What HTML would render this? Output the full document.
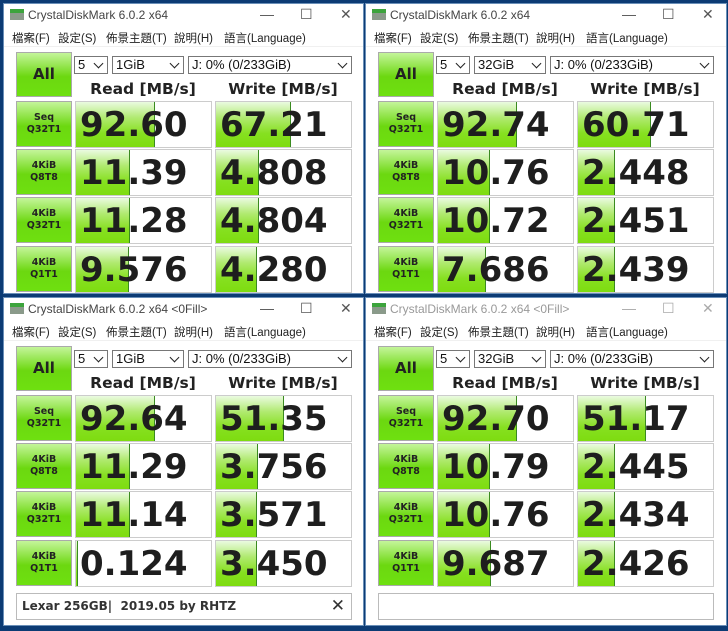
<!DOCTYPE html>
<html><head><meta charset="utf-8"><style>
*{box-sizing:border-box;margin:0;padding:0}
body{width:728px;height:631px;background:#0c3b74;position:relative;overflow:hidden;font-family:"Liberation Sans","Noto Sans CJK TC",sans-serif}
.w{position:absolute;background:#fff;border:1px solid #6a8fb8}
.t{position:absolute;left:0;top:0;right:0;height:22px;background:#fff;font-size:12px;color:#444}
.t .ic{position:absolute;left:6px;top:5px;width:14px;height:11px;background:#8a9a8a;border-top:4px solid #3ca43c}
.t .tx{position:absolute;left:24px;top:4px}
.t .ctl{position:absolute;top:2px;font-size:14px;color:#555}
.m{position:absolute;left:0;top:22px;right:0;height:21px;font-size:11.5px;color:#222;border-bottom:1px solid #f0f0f0}
.m span{position:absolute;top:4px}
.b{position:absolute;border:1px solid #aaa;background:linear-gradient(#c4f59a,#6cd810 55%,#6ee010);font-weight:bold;color:#222;text-align:center;font-family:"DejaVu Sans",sans-serif}
.all{font-size:15px;line-height:43px}
.lb{font-size:9.5px;line-height:12px;padding-top:10px}
.c{position:absolute;border:1px solid #777;height:18px;background:#fff;font-size:13px;padding-left:3px;line-height:16px;color:#111}
.c:after{content:"";position:absolute;right:5px;top:3px;width:6px;height:6px;border-right:1.5px solid #222;border-bottom:1.5px solid #222;transform:rotate(45deg)}
.h{position:absolute;width:136px;text-align:center;font-family:"DejaVu Sans",sans-serif;font-weight:bold;font-size:15.5px;color:#222}
.v{position:absolute;width:137px;height:47px;border:1px solid #ccc;background:#fff;overflow:hidden}
.v i{position:absolute;left:0;top:0;bottom:0;background:linear-gradient(#eafbe0,#b0ea70 35%,#86e020 70%,#7edc10);border-right:1px solid #3a8a20}
.v b{position:absolute;left:4px;top:0;font-family:"DejaVu Sans",sans-serif;font-size:34px;line-height:46px;color:#1e1e1e}
.cm{position:absolute;border:1px solid #bbb;height:27px;background:#fff;font-family:"DejaVu Sans",sans-serif;font-weight:bold;font-size:12px;color:#333;padding:5px 0 0 5px}
</style></head><body>

<!-- TL -->
<div class="w" style="left:3px;top:3px;width:361px;height:291px">
<div class="t"><div class="ic"></div><div class="tx">CrystalDiskMark 6.0.2 x64</div><div class="ctl" style="left:256px">—</div><div class="ctl" style="left:296px">☐</div><div class="ctl" style="left:336px">✕</div></div>
<div class="m"><span style="left:8px">檔案(F)</span><span style="left:54px">設定(S)</span><span style="left:102px">佈景主題(T)</span><span style="left:170px">說明(H)</span><span style="left:220px">語言(Language)</span></div>
<div class="b all" style="left:12px;top:48px;width:56px;height:45px">All</div>
<div class="c" style="left:70px;top:52px;width:34px">5</div><div class="c" style="left:108px;top:52px;width:72px">1GiB</div><div class="c" style="left:184px;top:52px;width:164px">J: 0% (0/233GiB)</div>
<div class="h" style="left:71px;top:76px">Read [MB/s]</div><div class="h" style="left:211px;top:76px">Write [MB/s]</div>
<div class="b lb" style="left:12px;top:97px;width:56px;height:46px">Seq<br>Q32T1</div>
<div class="v" style="left:71px;top:97px"><i style="width:79px"></i><b>92.60</b></div><div class="v" style="left:211px;top:97px"><i style="width:75px"></i><b>67.21</b></div>
<div class="b lb" style="left:12px;top:145px;width:56px;height:46px">4KiB<br>Q8T8</div>
<div class="v" style="left:71px;top:145px"><i style="width:54px"></i><b>11.39</b></div><div class="v" style="left:211px;top:145px"><i style="width:43px"></i><b>4.808</b></div>
<div class="b lb" style="left:12px;top:193px;width:56px;height:46px">4KiB<br>Q32T1</div>
<div class="v" style="left:71px;top:193px"><i style="width:54px"></i><b>11.28</b></div><div class="v" style="left:211px;top:193px"><i style="width:43px"></i><b>4.804</b></div>
<div class="b lb" style="left:12px;top:242px;width:56px;height:46px">4KiB<br>Q1T1</div>
<div class="v" style="left:71px;top:242px"><i style="width:53px"></i><b>9.576</b></div><div class="v" style="left:211px;top:242px"><i style="width:41px"></i><b>4.280</b></div>
</div>

<!-- TR -->
<div class="w" style="left:365px;top:3px;width:362px;height:291px">
<div class="t"><div class="ic"></div><div class="tx">CrystalDiskMark 6.0.2 x64</div><div class="ctl" style="left:256px">—</div><div class="ctl" style="left:296px">☐</div><div class="ctl" style="left:336px">✕</div></div>
<div class="m"><span style="left:8px">檔案(F)</span><span style="left:54px">設定(S)</span><span style="left:102px">佈景主題(T)</span><span style="left:170px">說明(H)</span><span style="left:220px">語言(Language)</span></div>
<div class="b all" style="left:12px;top:48px;width:56px;height:45px">All</div>
<div class="c" style="left:70px;top:52px;width:34px">5</div><div class="c" style="left:108px;top:52px;width:72px">32GiB</div><div class="c" style="left:184px;top:52px;width:164px">J: 0% (0/233GiB)</div>
<div class="h" style="left:71px;top:76px">Read [MB/s]</div><div class="h" style="left:211px;top:76px">Write [MB/s]</div>
<div class="b lb" style="left:12px;top:97px;width:56px;height:46px">Seq<br>Q32T1</div>
<div class="v" style="left:71px;top:97px"><i style="width:79px"></i><b>92.74</b></div><div class="v" style="left:211px;top:97px"><i style="width:73px"></i><b>60.71</b></div>
<div class="b lb" style="left:12px;top:145px;width:56px;height:46px">4KiB<br>Q8T8</div>
<div class="v" style="left:71px;top:145px"><i style="width:52px"></i><b>10.76</b></div><div class="v" style="left:211px;top:145px"><i style="width:37px"></i><b>2.448</b></div>
<div class="b lb" style="left:12px;top:193px;width:56px;height:46px">4KiB<br>Q32T1</div>
<div class="v" style="left:71px;top:193px"><i style="width:52px"></i><b>10.72</b></div><div class="v" style="left:211px;top:193px"><i style="width:37px"></i><b>2.451</b></div>
<div class="b lb" style="left:12px;top:242px;width:56px;height:46px">4KiB<br>Q1T1</div>
<div class="v" style="left:71px;top:242px"><i style="width:48px"></i><b>7.686</b></div><div class="v" style="left:211px;top:242px"><i style="width:37px"></i><b>2.439</b></div>
</div>

<!-- BL -->
<div class="w" style="left:3px;top:297px;width:361px;height:329px">
<div class="t"><div class="ic"></div><div class="tx">CrystalDiskMark 6.0.2 x64 &lt;0Fill&gt;</div><div class="ctl" style="left:256px">—</div><div class="ctl" style="left:296px">☐</div><div class="ctl" style="left:336px">✕</div></div>
<div class="m"><span style="left:8px">檔案(F)</span><span style="left:54px">設定(S)</span><span style="left:102px">佈景主題(T)</span><span style="left:170px">說明(H)</span><span style="left:220px">語言(Language)</span></div>
<div class="b all" style="left:12px;top:48px;width:56px;height:45px">All</div>
<div class="c" style="left:70px;top:52px;width:34px">5</div><div class="c" style="left:108px;top:52px;width:72px">1GiB</div><div class="c" style="left:184px;top:52px;width:164px">J: 0% (0/233GiB)</div>
<div class="h" style="left:71px;top:76px">Read [MB/s]</div><div class="h" style="left:211px;top:76px">Write [MB/s]</div>
<div class="b lb" style="left:12px;top:97px;width:56px;height:46px">Seq<br>Q32T1</div>
<div class="v" style="left:71px;top:97px"><i style="width:79px"></i><b>92.64</b></div><div class="v" style="left:211px;top:97px"><i style="width:68px"></i><b>51.35</b></div>
<div class="b lb" style="left:12px;top:145px;width:56px;height:46px">4KiB<br>Q8T8</div>
<div class="v" style="left:71px;top:145px"><i style="width:54px"></i><b>11.29</b></div><div class="v" style="left:211px;top:145px"><i style="width:42px"></i><b>3.756</b></div>
<div class="b lb" style="left:12px;top:193px;width:56px;height:46px">4KiB<br>Q32T1</div>
<div class="v" style="left:71px;top:193px"><i style="width:54px"></i><b>11.14</b></div><div class="v" style="left:211px;top:193px"><i style="width:41px"></i><b>3.571</b></div>
<div class="b lb" style="left:12px;top:242px;width:56px;height:46px">4KiB<br>Q1T1</div>
<div class="v" style="left:71px;top:242px"><i style="width:2px"></i><b>0.124</b></div><div class="v" style="left:211px;top:242px"><i style="width:41px"></i><b>3.450</b></div>
<div class="cm" style="left:12px;top:295px;width:336px">Lexar 256GB| &nbsp;2019.05 by RHTZ<span style="position:absolute;right:6px;top:2px;font-size:17px;font-weight:normal">✕</span></div>
</div>

<!-- BR -->
<div class="w" style="left:365px;top:297px;width:362px;height:329px">
<div class="t" style="color:#999"><div class="ic"></div><div class="tx">CrystalDiskMark 6.0.2 x64 &lt;0Fill&gt;</div><div class="ctl" style="left:256px;color:#aaa">—</div><div class="ctl" style="left:296px;color:#aaa">☐</div><div class="ctl" style="left:336px;color:#aaa">✕</div></div>
<div class="m"><span style="left:8px">檔案(F)</span><span style="left:54px">設定(S)</span><span style="left:102px">佈景主題(T)</span><span style="left:170px">說明(H)</span><span style="left:220px">語言(Language)</span></div>
<div class="b all" style="left:12px;top:48px;width:56px;height:45px">All</div>
<div class="c" style="left:70px;top:52px;width:34px">5</div><div class="c" style="left:108px;top:52px;width:72px">32GiB</div><div class="c" style="left:184px;top:52px;width:164px">J: 0% (0/233GiB)</div>
<div class="h" style="left:71px;top:76px">Read [MB/s]</div><div class="h" style="left:211px;top:76px">Write [MB/s]</div>
<div class="b lb" style="left:12px;top:97px;width:56px;height:46px">Seq<br>Q32T1</div>
<div class="v" style="left:71px;top:97px"><i style="width:79px"></i><b>92.70</b></div><div class="v" style="left:211px;top:97px"><i style="width:68px"></i><b>51.17</b></div>
<div class="b lb" style="left:12px;top:145px;width:56px;height:46px">4KiB<br>Q8T8</div>
<div class="v" style="left:71px;top:145px"><i style="width:52px"></i><b>10.79</b></div><div class="v" style="left:211px;top:145px"><i style="width:37px"></i><b>2.445</b></div>
<div class="b lb" style="left:12px;top:193px;width:56px;height:46px">4KiB<br>Q32T1</div>
<div class="v" style="left:71px;top:193px"><i style="width:52px"></i><b>10.76</b></div><div class="v" style="left:211px;top:193px"><i style="width:37px"></i><b>2.434</b></div>
<div class="b lb" style="left:12px;top:242px;width:56px;height:46px">4KiB<br>Q1T1</div>
<div class="v" style="left:71px;top:242px"><i style="width:53px"></i><b>9.687</b></div><div class="v" style="left:211px;top:242px"><i style="width:37px"></i><b>2.426</b></div>
<div class="cm" style="left:12px;top:295px;width:336px"></div>
</div>
</body></html>
